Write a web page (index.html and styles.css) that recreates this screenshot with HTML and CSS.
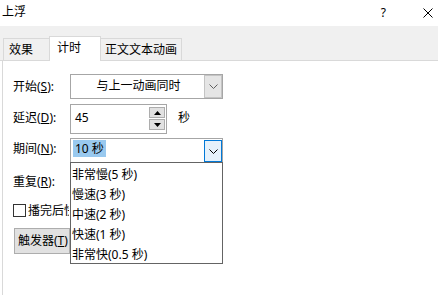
FILE: index.html
```html
<!DOCTYPE html>
<html lang="zh-CN">
<head>
<meta charset="utf-8">
<title>上浮</title>
<link rel="stylesheet" href="styles.css">
</head>
<body>
<div class="window">
  <div class="titlebar">
    <span class="title">上浮</span>
    <span class="help">?</span>
    <svg class="close" width="10" height="10" viewBox="0 0 10 10"><path d="M0.5 0.5 L9.5 9.5 M9.5 0.5 L0.5 9.5" stroke="#000" stroke-width="1" fill="none"/></svg>
  </div>
  <div class="tabstrip">
    <div class="tab t1">效果</div>
    <div class="tab t2 active">计时</div>
    <div class="tab t3">正文文本动画</div>
  </div>
  <div class="panel">
    <div class="row r1">
      <span class="lbl">开始(<u>S</u>):</span>
      <div class="combo">
        <span class="combo-text center">与上一动画同时</span>
        <span class="dd-btn"><svg width="9" height="5" viewBox="0 0 9 5"><path d="M0.5 0.5 L4.5 4.5 L8.5 0.5" stroke="#606060" fill="none"/></svg></span>
      </div>
    </div>
    <div class="row r2">
      <span class="lbl">延迟(<u>D</u>):</span>
      <div class="spin">
        <span class="spin-text">45</span>
        <div class="spin-btns">
          <span class="sb"><svg width="7" height="4" viewBox="0 0 7 4"><path d="M0 4 L3.5 0 L7 4 Z" fill="#000"/></svg></span>
          <span class="sb"><svg width="7" height="4" viewBox="0 0 7 4"><path d="M0 0 L3.5 4 L7 0 Z" fill="#000"/></svg></span>
        </div>
      </div>
      <span class="unit">秒</span>
    </div>
    <div class="row r3">
      <span class="lbl">期间(<u>N</u>):</span>
      <div class="combo">
        <span class="combo-text"><span class="sel">10 秒</span></span>
        <span class="dd-btn focus"><svg width="9" height="5" viewBox="0 0 9 5"><path d="M0.5 0.5 L4.5 4.5 L8.5 0.5" stroke="#000" fill="none"/></svg></span>
        <ul class="droplist">
          <li>非常慢(5 秒)</li>
          <li>慢速(3 秒)</li>
          <li>中速(2 秒)</li>
          <li>快速(1 秒)</li>
          <li>非常快(0.5 秒)</li>
        </ul>
      </div>
    </div>
    <div class="row r4">
      <span class="lbl">重复(<u>R</u>):</span>
    </div>
    <div class="row r5">
      <span class="checkbox"></span>
      <span class="cbtext">播完后快退</span>
    </div>
    <div class="row r6">
      <span class="btn">触发器(<u>T</u>)</span>
    </div>
  </div>
</div>
</body>
</html>
```

FILE: styles.css
```css
* { box-sizing: border-box; }
html, body { margin: 0; padding: 0; }
body {
  width: 438px;
  height: 295px;
  overflow: hidden;
  background: #fff;
  font-family: "Noto Sans", "Noto Sans CJK SC", sans-serif;
  font-size: 12px;
  line-height: 16px;
  color: #000;
}
.window { width: 438px; height: 295px; display: flex; flex-direction: column; }

.titlebar {
  height: 26px;
  display: flex;
  align-items: center;
  padding: 0 5px 0 2px;
  background: #fff;
}
.title { flex: 1; margin-top: -2px; }
.help { font-size: 12px; margin-right: 37px; margin-top: -1px; }
.close { display: block; margin-top: -1px; }

.tabstrip {
  height: 35px;
  background: #f0f0f0;
  border-bottom: 1px solid #d9d9d9;
  display: flex;
  align-items: flex-end;
  padding-left: 3px;
}
.tab {
  height: 22px;
  border: 1px solid #d9d9d9;
  border-bottom: none;
  margin-left: -1px;
  background: #f0f0f0;
  display: flex;
  align-items: center;
}
.tab:first-child { margin-left: 0; }
.t1 { width: 47px; padding-left: 5px; }
.t2 { width: 52px; padding-left: 7px; }
.t3 { width: 82px; padding-left: 4px; }
.tab.active {
  height: 25px;
  margin-bottom: -1px;
  background: #fff;
  position: relative;
  z-index: 1;
  padding-bottom: 3px;
}

.panel {
  flex: 1;
  margin-left: 2px;
  border-left: 1px solid #d9d9d9;
  padding: 13px 0 0 10px;
  display: flex;
  flex-direction: column;
}
.row { display: flex; align-items: center; }
.lbl { width: 57px; flex: none; }
.r1 { height: 25px; }
.r2 { height: 30px; margin-top: 5px; }
.r3 { height: 25px; margin-top: 4px; }
.r4 { height: 25px; margin-top: 6px; }
.r5 { height: 13px; margin-top: 10px; }
.r6 { height: 26px; margin-top: 11px; }
.r2 .lbl { margin-top: -2px; }
.r3 .lbl { margin-top: -3px; }

.combo {
  width: 153px;
  height: 25px;
  border: 1px solid #a6a6a6;
  background: #fff;
  display: flex;
  align-items: stretch;
  position: relative;
}
.combo-text {
  flex: 1;
  display: flex;
  align-items: center;
  padding-left: 2px;
}
.combo-text.center { justify-content: center; margin-top: -1px; }
.sel {
  background: #99c9ef;
  padding: 1px 2px 0 2px;
  line-height: 16px;
  margin-top: -4px;
}
.dd-btn {
  width: 18px;
  background: #e5e5e5;
  border: 1px solid #c4c4c4;
  display: flex;
  align-items: center;
  justify-content: center;
}
.dd-btn.focus {
  background: #e5f1fb;
  border-color: #0078d7;
  margin: 1px 0 0 0;
}
.dd-btn svg { display: block; }

.droplist {
  position: absolute;
  left: -1px;
  top: 100%;
  width: 153px;
  height: 102px;
  margin: 0;
  padding: 2px 0 0 1px;
  list-style: none;
  background: #fff;
  border: 1px solid #646464;
  z-index: 10;
}
.droplist li { height: 20px; line-height: 20px; white-space: nowrap; }

.spin {
  width: 97px;
  height: 30px;
  border: 1px solid #a6a6a6;
  background: #fff;
  display: flex;
  align-items: flex-start;
  padding: 5px 1px 0 4px;
}
.spin-text { flex: 1; }
.spin-btns { display: flex; flex-direction: column; gap: 1px; margin-top: -3px; }
.sb {
  width: 16px;
  height: 11px;
  background: #e1e1e1;
  border: 1px solid #adadad;
  display: flex;
  align-items: center;
  justify-content: center;
}
.sb svg { display: block; }
.unit { margin-left: 11px; margin-top: -2px; }

.checkbox {
  width: 13px;
  height: 13px;
  border: 1px solid #333;
  background: #fff;
  flex: none;
}
.cbtext {
  margin-left: 2px;
  width: 41px;
  overflow: hidden;
  white-space: nowrap;
  flex: none;
}

.btn {
  margin-left: 1px;
  width: 56px;
  height: 26px;
  background: #e1e1e1;
  border: 1px solid #adadad;
  display: flex;
  align-items: center;
  padding-left: 3px;
  white-space: nowrap;
  overflow: hidden;
}
```
